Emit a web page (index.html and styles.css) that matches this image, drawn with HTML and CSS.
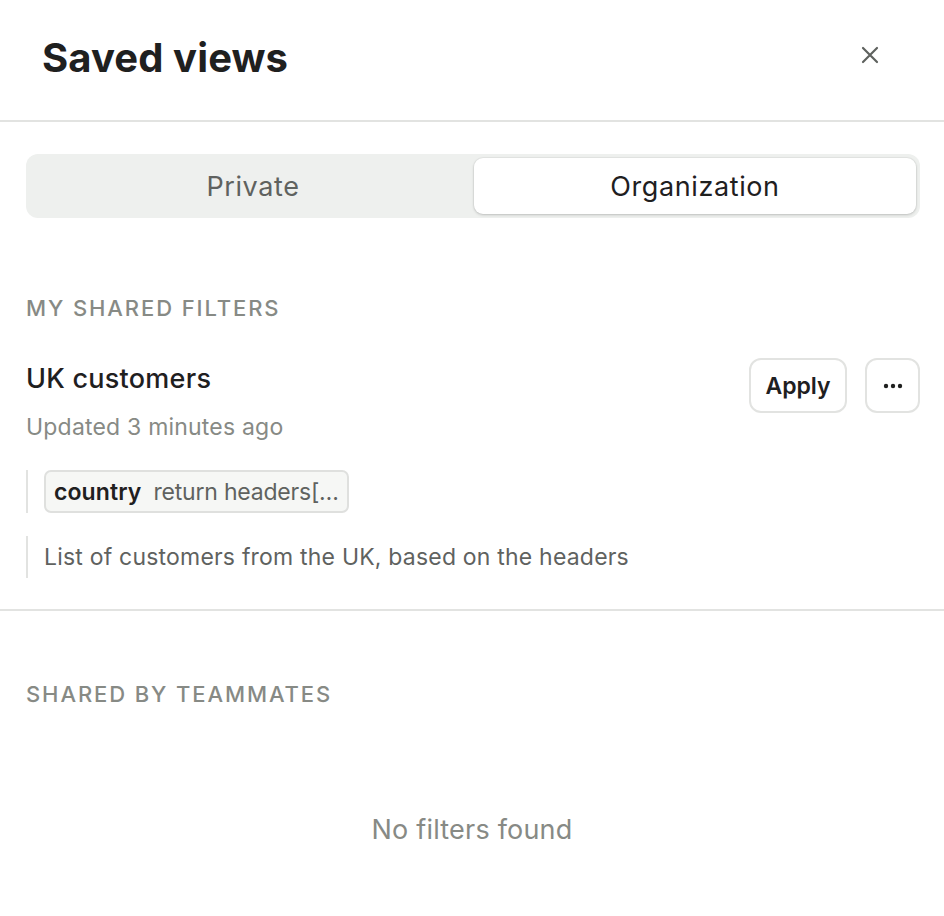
FILE: index.html
```html
<!DOCTYPE html>
<html lang="en">
<head>
<meta charset="utf-8">
<title>Saved views</title>
<link rel="stylesheet" href="styles.css">
</head>
<body>
<div class="panel">
  <header class="header">
    <h1 class="title">Saved views</h1>
    <button class="close" aria-label="Close">
      <svg width="20" height="20" viewBox="0 0 20 20" fill="none" stroke="#5f625f" stroke-width="2.2" stroke-linecap="round"><path d="M3 3L17 17M17 3L3 17"/></svg>
    </button>
  </header>
  <div class="body">
    <div class="segmented">
      <div class="seg">Private</div>
      <div class="seg seg-active">Organization</div>
    </div>
    <section class="section">
      <h2 class="section-title">MY SHARED FILTERS</h2>
      <div class="view">
        <div class="view-top">
          <div class="view-info">
            <div class="view-name">UK customers</div>
            <div class="view-meta">Updated 3 minutes ago</div>
          </div>
          <div class="view-actions">
            <button class="btn btn-apply">Apply</button>
            <button class="btn btn-more" aria-label="More">
              <svg width="20" height="6" viewBox="0 0 20 6" fill="#1f201f"><circle cx="3" cy="3" r="2.2"/><circle cx="10" cy="3" r="2.2"/><circle cx="17" cy="3" r="2.2"/></svg>
            </button>
          </div>
        </div>
        <div class="quote">
          <span class="chip"><b class="chip-key">country</b><span class="chip-val">return headers[…</span></span>
        </div>
        <div class="quote quote-text">List of customers from the UK, based on the headers</div>
      </div>
    </section>
  </div>
  <section class="section section-team">
    <h2 class="section-title">SHARED BY TEAMMATES</h2>
    <div class="empty">No filters found</div>
  </section>
</div>
</body>
</html>
```

FILE: styles.css
```css
* { box-sizing: border-box; }
html, body { margin: 0; padding: 0; background: #fff; }
body {
  font-family: Inter, "Noto Sans", sans-serif;
  color: #1f201f;
  -webkit-font-smoothing: antialiased;
}
.panel { width: 944px; min-height: 916px; display: flex; flex-direction: column; }
.header {
  height: 122px;
  display: flex;
  align-items: center;
  justify-content: space-between;
  padding: 0 56px 0 42px;
  border-bottom: 2px solid #e2e3e1;
}
.title { margin: 0; font-size: 40px; font-weight: 700; letter-spacing: 0.1px; color: #1f201f; padding-bottom: 6px; }
.close {
  width: 36px; height: 36px; border: 0; background: transparent; padding: 0;
  display: flex; align-items: center; justify-content: center; margin-bottom: 10px;
}
.body { padding: 32px 24px 0 26px; border-bottom: 2px solid #e2e3e1; }
.segmented {
  display: grid; grid-template-columns: 1fr 1fr;
  background: #eef0ee; border-radius: 12px; padding: 4px 4px 4px 6px; height: 64px;
}
.seg {
  display: flex; align-items: center; justify-content: center;
  font-size: 27px; letter-spacing: 0.6px; color: #5f625f; border-radius: 9px;
}
.seg-active {
  background: #fff; color: #1f201f;
  box-shadow: 0 1px 3px rgba(0,0,0,0.18), 0 0 0 1px rgba(0,0,0,0.03);
}
.section { padding-top: 76px; }
.section-title {
  margin: 0; font-size: 22px; font-weight: 500; letter-spacing: 1.9px; color: #878a85;
  line-height: 28px;
}
.view { padding: 36px 0 31px; }
.view-top { display: flex; justify-content: space-between; align-items: flex-start; }
.view-name { font-size: 27px; font-weight: 500; letter-spacing: 0.25px; color: #1f201f; line-height: 36px; margin-top: 3px; }
.view-meta { font-size: 23px; letter-spacing: 0.2px; color: #878a85; line-height: 30px; margin-top: 15px; }
.view-actions { display: flex; gap: 18px; }
.btn {
  height: 55px; border: 2px solid #e2e3e1; border-radius: 12px; background: #fff;
  font-family: inherit; color: #1f201f; display: flex; align-items: center; justify-content: center;
}
.btn-apply { width: 98px; font-size: 23px; font-weight: 600; }
.btn-more { width: 55px; padding: 0; }
.quote {
  border-left: 2px solid #e2e3e1; padding-left: 16px; margin-top: 28px;
}
.quote + .quote { margin-top: 23px; }
.chip {
  display: inline-flex; align-items: center; gap: 12px;
  height: 43px; padding: 0 8px; background: #f6f7f5; border: 2px solid #dfe0de; border-radius: 7px;
  font-size: 23px;
}
.chip-key { font-weight: 600; color: #1f201f; letter-spacing: 0.1px; }
.chip-val { color: #5f625f; letter-spacing: -0.2px; }
.quote-text { font-size: 23px; letter-spacing: 0.2px; color: #5f625f; line-height: 42px; }
.section-team { padding: 69px 26px 0; }
.empty { text-align: center; font-size: 27px; letter-spacing: 0.2px; color: #878a85; margin-top: 105px; }
```
